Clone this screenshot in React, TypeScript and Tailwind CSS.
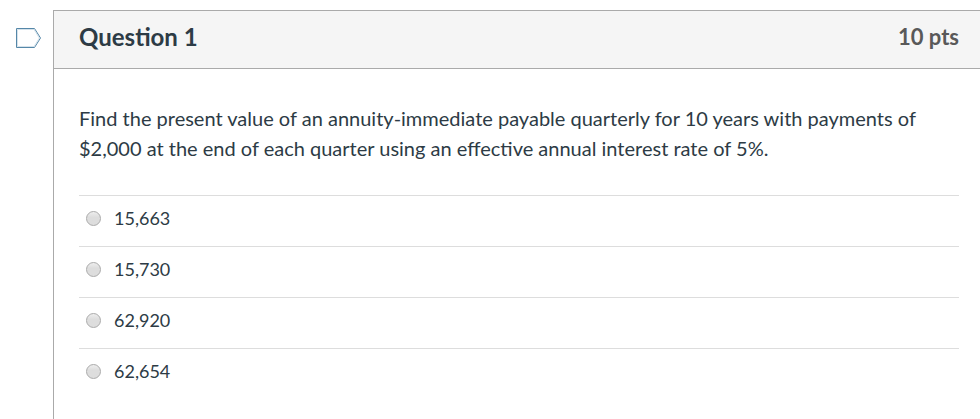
import React, { useState } from 'react';

const answers = ['15,663', '15,730', '62,920', '62,654'];

const FlagButton: React.FC = () => {
  const [flagged, setFlagged] = useState<boolean>(false);

  return (
    <button
      type="button"
      aria-label="Flag question"
      aria-pressed={flagged}
      onClick={() => setFlagged(!flagged)}
      className="mt-7 h-5 w-[25px] shrink-0"
    >
      <svg viewBox="0 0 25 20" className="h-5 w-[25px]" fill={flagged ? '#fcd116' : '#fff'}>
        <path d="M0.5 0.5H18.5L24.5 10L18.5 19.5H0.5Z" stroke="#5587a8" />
        {/* soft inner edge */}
        <path d="M1.5 1.5H18L23.3 10L18 18.5H1.5Z" fill="none" stroke="#c3d5e2" strokeOpacity="0.7" />
      </svg>
    </button>
  );
};

const App: React.FC = () => {
  const [selected, setSelected] = useState<string>('');

  return (
    <main className="flex min-h-screen bg-white pl-4 font-['Lato',sans-serif] text-[#2d3b45]">
      <FlagButton />
      <section className="mt-2.5 ml-3 flex-1 border-t border-l border-[#aaa]">
        <header className="flex items-center justify-between border-b border-[#aaa] bg-[#f5f5f5] pt-2.5 pr-[21px] pb-[15px] pl-[25px]">
          <h1 className="text-2xl leading-8 font-bold">Question 1</h1>
          <span className="text-[22px] leading-8 font-bold text-[#595959]">10 pts</span>
        </header>
        <div className="pt-[34px] pr-[21px] pl-[25px]">
          <p id="question" className="text-xl leading-[30px]">
            Find the present value of an annuity-immediate payable quarterly for 10 years with payments of $2,000 at the
            end of each quarter using an effective annual interest rate of 5%.
          </p>
          <div role="radiogroup" aria-labelledby="question" className="mt-8">
            {answers.map((answer) => (
              <label
                key={answer}
                className="flex h-[51px] items-center gap-[13px] border-t border-[#ddd] pb-1.5 pl-[7px] text-lg leading-6"
              >
                <input
                  type="radio"
                  name="answer"
                  value={answer}
                  checked={selected === answer}
                  onChange={() => setSelected(answer)}
                  className="size-[15px] appearance-none rounded-full border border-[#aaa] bg-linear-to-b from-[#eee] to-[#ddd] to-40% checked:border-4 checked:border-[#555]"
                />
                {answer}
              </label>
            ))}
          </div>
        </div>
      </section>
    </main>
  );
};

export default App;
